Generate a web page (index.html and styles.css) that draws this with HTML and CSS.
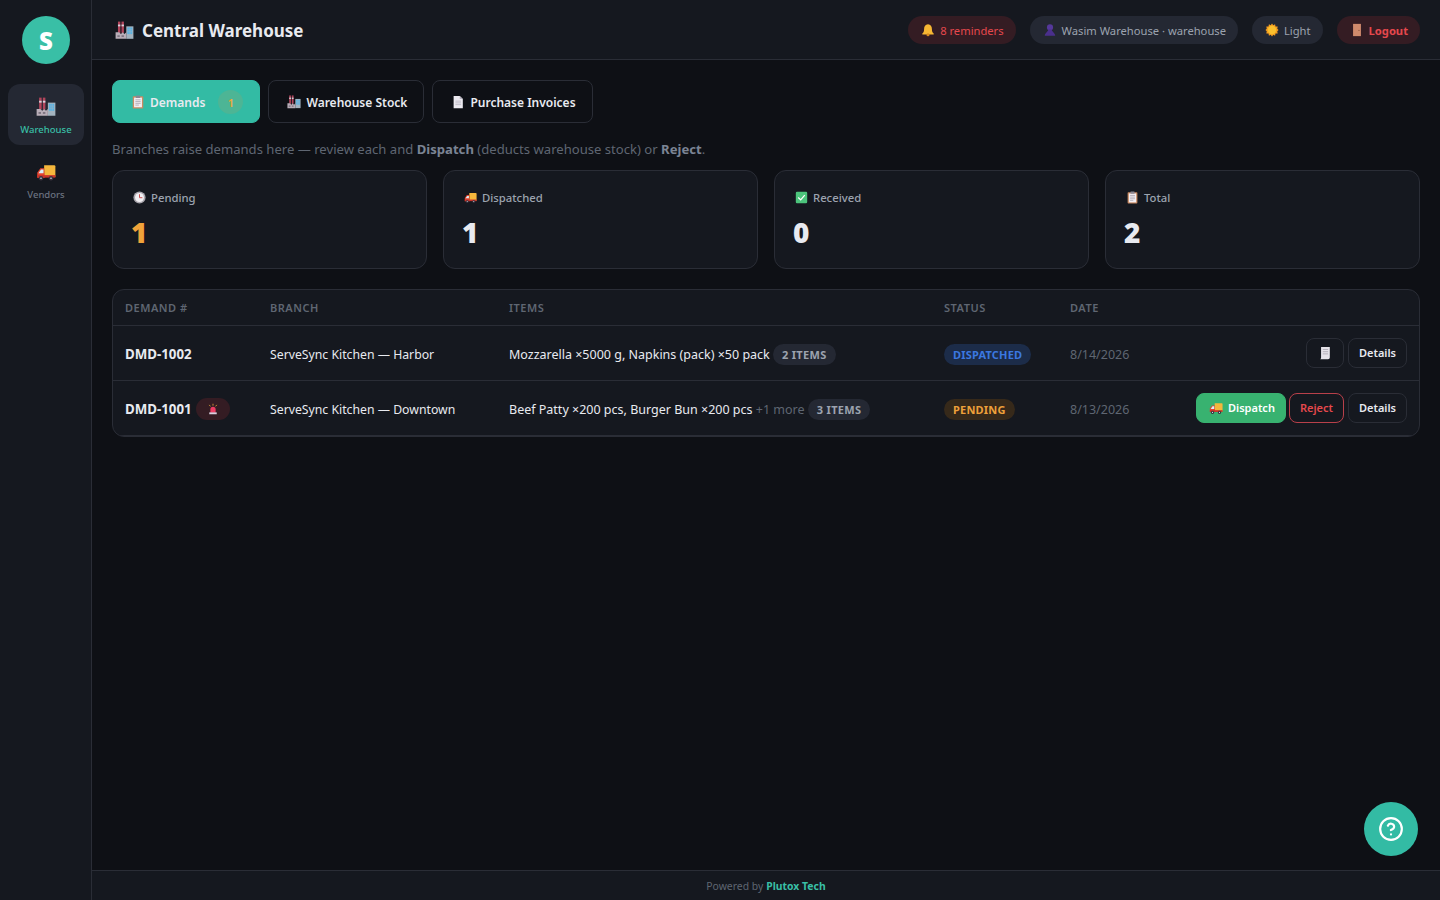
FILE: index.html
```html
<!DOCTYPE html>
<html lang="en">
<head>
    <meta charset="UTF-8">
    <title>Central Warehouse</title>
    <link rel="stylesheet" href="styles.css">
</head>
<body>
<svg class="sprite" width="0" height="0" aria-hidden="true">
    <symbol id="i-factory" viewBox="0 0 32 32">
        <rect x="5" y="1" width="4" height="19" fill="#b2455c"/>
        <rect x="11" y="1" width="4" height="19" fill="#b2455c"/>
        <rect x="5" y="6" width="4" height="3" fill="#d8d3dc"/>
        <rect x="11" y="6" width="4" height="3" fill="#d8d3dc"/>
        <rect x="19" y="9" width="12" height="21" fill="#a3b3bf"/>
        <rect x="21" y="11" width="8" height="11" fill="#4fb3e8"/>
        <path d="M21 14.5h8M21 18h8M24 11v11M26.500 11v11" stroke="#a3b3bf" stroke-width=".8"/>
        <path d="M1 30V19l6 0 3 3 3-3 3 3 3-3v11z" fill="#b9aeb8"/>
        <rect x="4" y="24" width="4" height="3" fill="#7d7480"/>
        <rect x="11" y="24" width="4" height="3" fill="#7d7480"/>
    </symbol>
    <symbol id="i-truck" viewBox="0 0 32 32">
        <path d="M13 5h16a2 2 0 0 1 2 2v17H13z" fill="#f5b73c"/>
        <path d="M13 10H7l-5 7v8h12z" fill="#e5432f"/>
        <path d="M8 12h4v6H4z" fill="#d9f0fa"/>
        <rect x="2" y="21" width="29" height="4" fill="#c9342a"/>
        <circle cx="8" cy="26" r="3.500" fill="#3a3340"/>
        <circle cx="24" cy="26" r="3.500" fill="#3a3340"/>
        <circle cx="8" cy="26" r="1.300" fill="#d8d3dc"/>
        <circle cx="24" cy="26" r="1.300" fill="#d8d3dc"/>
    </symbol>
    <symbol id="i-clipboard" viewBox="0 0 32 32">
        <rect x="4" y="3" width="24" height="28" rx="2" fill="#c98a63"/>
        <rect x="7" y="6" width="18" height="22" fill="#f3eef2"/>
        <rect x="11" y="1" width="10" height="6" rx="1" fill="#8a8794"/>
        <path d="M10 11h12M10 15h12M10 19h12M10 23h8" stroke="#a7a1ad" stroke-width="1.800"/>
    </symbol>
    <symbol id="i-doc" viewBox="0 0 32 32">
        <path d="M6 2h14l7 7v21H6z" fill="#eceaf0"/>
        <path d="M20 2l7 7h-7z" fill="#b8b4c0"/>
        <path d="M10 14h13M10 18h13M10 22h13" stroke="#b8b4c0" stroke-width="1.800"/>
    </symbol>
    <symbol id="i-clock" viewBox="0 0 32 32">
        <circle cx="16" cy="16" r="15" fill="#a9a6ad"/>
        <circle cx="16" cy="16" r="11" fill="#f2f0f3"/>
        <path d="M16 8v8.500h7" fill="none" stroke="#c94a4a" stroke-width="2.400"/>
    </symbol>
    <symbol id="i-check" viewBox="0 0 32 32">
        <rect x="2" y="2" width="28" height="28" rx="3" fill="#4cc47c"/>
        <path d="M8 16l6 6 10-12" fill="none" stroke="#fff" stroke-width="3"/>
    </symbol>
    <symbol id="i-bell" viewBox="0 0 32 32">
        <path d="M16 3c-6 0-9 5-9 11 0 5-1 7-4 10v2h26v-2c-3-3-4-5-4-10 0-6-3-11-9-11z" fill="#f7b733"/>
        <circle cx="16" cy="27" r="3.500" fill="#d98a1f"/>
    </symbol>
    <symbol id="i-person" viewBox="0 0 32 32">
        <circle cx="16" cy="10" r="7" fill="#55389b"/>
        <path d="M12 15h8c0 5 7 7 8 14H4c1-7 8-9 8-14z" fill="#4a2f8c"/>
    </symbol>
    <symbol id="i-sun" viewBox="0 0 32 32">
        <path d="M16 1l3 4 4-2 1 5 5 0-1 5 3 3-3 3 1 5-5 0-1 5-4-2-3 4-3-4-4 2-1-5-5 0 1-5-3-3 3-3-1-5 5 0 1-5 4 2z" fill="#f59e1f"/>
        <circle cx="16" cy="16" r="9.500" fill="#fbc02d"/>
    </symbol>
    <symbol id="i-door" viewBox="0 0 32 32">
        <rect x="7" y="2" width="18" height="28" fill="#cf8a6c"/>
        <circle cx="20.500" cy="17" r="1.500" fill="#8e5740"/>
    </symbol>
    <symbol id="i-siren" viewBox="0 0 32 32">
        <path d="M9 26V17a7 7 0 0 1 14 0v9z" fill="#ee3d63"/>
        <rect x="6" y="25" width="20" height="5" fill="#d9cfe0"/>
        <path d="M16 2v5M6 5l3 4M26 5l-3 4" stroke="#f6b73c" stroke-width="2"/>
    </symbol>
    <symbol id="i-receipt" viewBox="0 0 32 32">
        <path d="M7 2h20v24a4 4 0 0 1-4 4H5a4 4 0 0 0 2-4z" fill="#e6e3ea"/>
        <path d="M11 8h12M11 13h12M11 18h12" stroke="#a9a5b0" stroke-width="1.800"/>
    </symbol>
</svg>

<div class="app">
    <aside class="sidebar">
        <div class="logo">S</div>
        <a class="nav-item nav-active">
            <svg class="nav-icon"><use href="#i-factory"/></svg>
            <span>Warehouse</span>
        </a>
        <a class="nav-item">
            <svg class="nav-icon"><use href="#i-truck"/></svg>
            <span>Vendors</span>
        </a>
    </aside>

    <div class="main">
        <header class="topbar">
            <h1 class="page-title"><svg class="title-icon"><use href="#i-factory"/></svg>Central Warehouse</h1>
            <div class="top-actions">
                <span class="pill pill-red"><svg class="ico"><use href="#i-bell"/></svg>8 reminders</span>
                <span class="pill"><svg class="ico"><use href="#i-person"/></svg>Wasim Warehouse · warehouse</span>
                <span class="pill"><svg class="ico"><use href="#i-sun"/></svg>Light</span>
                <span class="pill pill-red pill-bold"><svg class="ico"><use href="#i-door"/></svg>Logout</span>
            </div>
        </header>

        <main class="content">
            <div class="tabs">
                <button class="tab tab-active"><svg class="ico"><use href="#i-clipboard"/></svg>Demands<span class="tab-count">1</span></button>
                <button class="tab"><svg class="ico"><use href="#i-factory"/></svg>Warehouse Stock</button>
                <button class="tab"><svg class="ico"><use href="#i-doc"/></svg>Purchase Invoices</button>
            </div>

            <p class="intro">Branches raise demands here — review each and <b>Dispatch</b> (deducts warehouse stock) or <b>Reject</b>.</p>

            <div class="stats">
                <div class="stat">
                    <div class="stat-label"><svg class="ico-sm"><use href="#i-clock"/></svg>Pending</div>
                    <div class="stat-value stat-orange">1</div>
                </div>
                <div class="stat">
                    <div class="stat-label"><svg class="ico-sm"><use href="#i-truck"/></svg>Dispatched</div>
                    <div class="stat-value">1</div>
                </div>
                <div class="stat">
                    <div class="stat-label"><svg class="ico-sm"><use href="#i-check"/></svg>Received</div>
                    <div class="stat-value">0</div>
                </div>
                <div class="stat">
                    <div class="stat-label"><svg class="ico-sm"><use href="#i-clipboard"/></svg>Total</div>
                    <div class="stat-value">2</div>
                </div>
            </div>

            <div class="table-wrap">
                <table class="demands">
                    <colgroup>
                        <col class="col-id">
                        <col class="col-branch">
                        <col class="col-items">
                        <col class="col-status">
                        <col class="col-date">
                        <col>
                    </colgroup>
                    <thead>
                        <tr>
                            <th>Demand #</th>
                            <th>Branch</th>
                            <th>Items</th>
                            <th>Status</th>
                            <th>Date</th>
                            <th></th>
                        </tr>
                    </thead>
                    <tbody>
                        <tr>
                            <td class="demand-id"><div class="id-row">DMD-1002</div></td>
                            <td class="branch">ServeSync Kitchen — Harbor</td>
                            <td>Mozzarella ×5000 g, Napkins (pack) ×50 pack <span class="count">2 items</span></td>
                            <td><span class="badge badge-blue">Dispatched</span></td>
                            <td class="date">8/14/2026</td>
                            <td class="actions">
                                <div class="action-row">
                                    <button class="btn btn-icon"><svg class="ico"><use href="#i-receipt"/></svg></button>
                                    <button class="btn">Details</button>
                                </div>
                            </td>
                        </tr>
                        <tr>
                            <td class="demand-id"><div class="id-row">DMD-1001<span class="urgent"><svg class="ico"><use href="#i-siren"/></svg></span></div></td>
                            <td class="branch">ServeSync Kitchen — Downtown</td>
                            <td>Beef Patty ×200 pcs, Burger Bun ×200 pcs <span class="more">+1 more</span> <span class="count">3 items</span></td>
                            <td><span class="badge badge-orange">Pending</span></td>
                            <td class="date">8/13/2026</td>
                            <td class="actions">
                                <div class="action-row">
                                    <button class="btn btn-green"><svg class="ico"><use href="#i-truck"/></svg>Dispatch</button>
                                    <button class="btn btn-reject">Reject</button>
                                    <button class="btn">Details</button>
                                </div>
                            </td>
                        </tr>
                    </tbody>
                </table>
            </div>
        </main>

        <footer class="footer">Powered by <b>Plutox Tech</b></footer>
    </div>
</div>

<button class="help">
    <svg width="26" height="26" viewBox="0 0 24 24" fill="none" stroke="#fff" stroke-width="2" stroke-linecap="round" stroke-linejoin="round">
        <circle cx="12" cy="12" r="10"/>
        <path d="M9.100 9a3 3 0 0 1 5.800 1c0 2-3 3-3 3"/>
        <path d="M12 17h.01"/>
    </svg>
</button>
</body>
</html>
```

FILE: styles.css
```css
* {
    box-sizing: border-box;
}
body {
    margin: 0;
    background: #0e1015;
    color: #e8eaf0;
    font-family: "Noto Sans", sans-serif;
    font-size: 13px;
}
.sprite {
    position: absolute;
}
.app {
    display: flex;
    height: 900px;
}

/* sidebar */
.sidebar {
    width: 92px;
    flex-shrink: 0;
    background: #15181f;
    border-right: 1px solid #2a2d36;
    display: flex;
    flex-direction: column;
    align-items: center;
    padding: 16px 7px 0 8px;
}
.logo {
    width: 48px;
    height: 48px;
    border-radius: 50%;
    background: #39bfa6;
    color: #fff;
    font-size: 24px;
    font-weight: 900;
    display: flex;
    align-items: center;
    justify-content: center;
    margin-bottom: 20px;
}
.nav-item {
    width: 76px;
    height: 61px;
    border-radius: 12px;
    display: flex;
    flex-direction: column;
    align-items: center;
    gap: 6px;
    padding-top: 13px;
    font-size: 9.500px;
    font-weight: 500;
    color: #6b7280;
    margin-bottom: 4px;
}
.nav-active {
    background: #242833;
    color: #39bfa6;
}
.nav-icon {
    width: 20px;
    height: 20px;
}

/* top bar */
.main {
    flex: 1;
    min-width: 0;
    display: flex;
    flex-direction: column;
}
.topbar {
    height: 60px;
    flex-shrink: 0;
    background: #15181f;
    border-bottom: 1px solid #2a2d36;
    display: flex;
    align-items: center;
    justify-content: space-between;
    padding: 0 20px 0 23px;
}
.page-title {
    margin: 0;
    padding-top: 2px;
    font-size: 17px;
    font-weight: 700;
    display: flex;
    align-items: center;
    gap: 8px;
}
.title-icon {
    width: 19px;
    height: 19px;
}
.top-actions {
    display: flex;
    gap: 14px;
}
.pill {
    height: 28px;
    border-radius: 14px;
    background: #242833;
    color: #9ca3af;
    font-size: 11.200px;
    display: flex;
    align-items: center;
    gap: 5px;
    padding: 1px 12px 0 13px;
}
.pill-red {
    background: #341c23;
    color: #e5484d;
}
.pill-bold {
    font-weight: 700;
}
.ico {
    width: 14px;
    height: 14px;
    flex-shrink: 0;
}
.ico-sm {
    width: 13px;
    height: 13px;
}

/* content */
.content {
    flex: 1;
    padding: 20px 20px 0;
}
.tabs {
    display: flex;
    gap: 8px;
}
.tab {
    height: 43px;
    padding: 1px 16px 0 18px;
    border: 1px solid #2a2d36;
    border-radius: 8px;
    background: #0e1015;
    color: #e8eaf0;
    font-family: inherit;
    font-size: 12px;
    font-weight: 600;
    display: flex;
    align-items: center;
    gap: 5px;
}
.tab-active {
    background: #33bba4;
    border-color: #33bba4;
}
.tab-count {
    width: 25px;
    height: 24px;
    border-radius: 50%;
    background: #4db595;
    color: #eea93a;
    font-size: 11px;
    display: flex;
    align-items: center;
    justify-content: center;
    margin-left: 8px;
}
.intro {
    margin: 18px 0 12px;
    height: 17px;
    line-height: 17px;
    font-size: 13.100px;
    color: #5f6672;
}
.intro b {
    color: #7b8494;
}
.stats {
    display: grid;
    grid-template-columns: repeat(4, 1fr);
    gap: 16px;
    margin-bottom: 20px;
}
.stat {
    height: 99px;
    background: #15181f;
    border: 1px solid #2a2d36;
    border-radius: 12px;
    padding: 18px 18px;
}
.stat-label {
    display: flex;
    align-items: center;
    gap: 5px;
    height: 16px;
    font-size: 11.300px;
    font-weight: 500;
    color: #9ca3af;
    padding-left: 2px;
}
.stat-value {
    margin-top: 10px;
    font-size: 28px;
    line-height: 34px;
    font-weight: 900;
}
.stat-orange {
    color: #f0a33a;
}

/* table */
.table-wrap {
    background: #15181f;
    border: 1px solid #2a2d36;
    border-radius: 12px;
    overflow: hidden;
}
.demands {
    width: 100%;
    border-collapse: separate;
    border-spacing: 0;
    table-layout: fixed;
}
.col-id {
    width: 145px;
}
.col-branch {
    width: 239px;
}
.col-items {
    width: 435px;
}
.col-status {
    width: 126px;
}
.col-date {
    width: 110px;
}
.demands th {
    height: 36px;
    padding: 0 12px;
    text-align: left;
    font-size: 11px;
    font-weight: 600;
    letter-spacing: .5px;
    text-transform: uppercase;
    color: #5f6672;
    border-bottom: 1px solid #2a2d36;
}
.demands td {
    height: 55px;
    padding: 2px 12px 0;
    font-size: 12.500px;
    white-space: nowrap;
    border-bottom: 1px solid #2a2d36;
}
.demands .demand-id {
    padding-top: 1px;
    font-size: 13.300px;
    font-weight: 700;
}
.id-row {
    display: flex;
    align-items: center;
    gap: 4px;
}
.demands .branch {
    font-size: 12.250px;
}
.demands .date {
    color: #5f6672;
}
.more {
    color: #5f6672;
}
.count {
    display: inline-block;
    height: 21px;
    line-height: 21px;
    padding: 0 9px;
    border-radius: 11px;
    background: #242833;
    color: #9ca3af;
    font-size: 11px;
    font-weight: 700;
    letter-spacing: .3px;
    text-transform: uppercase;
}
.urgent {
    display: flex;
    align-items: center;
    justify-content: center;
    width: 34px;
    height: 22px;
    border-radius: 11px;
    background: #341c23;
}
.urgent .ico {
    width: 12px;
    height: 12px;
}
.badge {
    display: inline-block;
    height: 21px;
    line-height: 21px;
    padding: 0 9px;
    border-radius: 11px;
    font-size: 11px;
    font-weight: 700;
    letter-spacing: .2px;
    text-transform: uppercase;
}
.badge-blue {
    background: #1c2c49;
    color: #3b78e0;
}
.badge-orange {
    background: #36291a;
    color: #eea03a;
}
.demands .actions {
    padding-top: 0;
}
.action-row {
    display: flex;
    justify-content: flex-end;
    gap: 4px;
}
.btn {
    display: flex;
    align-items: center;
    gap: 5px;
    height: 30px;
    padding: 0 10px 1px;
    border: 1px solid #2a2d36;
    border-radius: 8px;
    background: #15181f;
    color: #e8eaf0;
    font-family: inherit;
    font-size: 11px;
    font-weight: 600;
}
.btn-icon {
    padding: 0 11px;
}
.btn-green {
    background: #38b270;
    border-color: #38b270;
    color: #fff;
    padding: 0 10px 1px 12px;
    margin-right: -1px;
}
.btn-reject {
    border-color: #b8404a;
    color: #e5484d;
}

/* footer */
.footer {
    height: 30px;
    flex-shrink: 0;
    background: #15181f;
    border-top: 1px solid #2a2d36;
    display: flex;
    align-items: center;
    justify-content: center;
    gap: 3px;
    font-size: 10.400px;
    color: #5f6672;
}
.footer b {
    color: #39bfa6;
}
.help {
    position: absolute;
    left: 1364px;
    top: 802px;
    width: 54px;
    height: 54px;
    border: 0;
    border-radius: 50%;
    background: #33bba4;
    display: flex;
    align-items: center;
    justify-content: center;
    padding: 0;
}
```
